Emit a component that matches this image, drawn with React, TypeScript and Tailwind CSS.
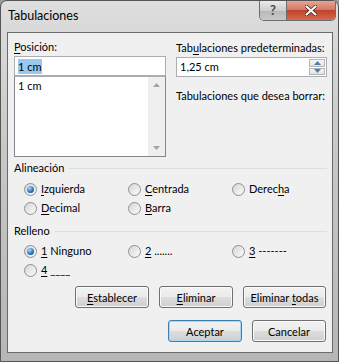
import React from "react";

const Key = ({ children }: { children: React.ReactNode }) => (
  <span className="underline decoration-1 underline-offset-[2px]">{children}</span>
);

const Radio = ({ checked }: { checked?: boolean }) => (
  <span className="flex h-[13px] w-[13px] shrink-0 items-center justify-center rounded-full border border-[#8e8f8f] bg-[linear-gradient(135deg,#d6d6d6,#fbfbfb)]">
    {checked && (
      <span className="h-[7px] w-[7px] rounded-full bg-[radial-gradient(circle_at_35%_30%,#a9dcff,#2a6fb6_60%,#0e3f7a)]" />
    )}
  </span>
);

const Option = ({ checked, children }: { checked?: boolean; children: React.ReactNode }) => (
  <label className="flex h-[19px] items-center gap-[4px] whitespace-nowrap">
    <Radio checked={checked} />
    <span>{children}</span>
  </label>
);

const GroupTitle = ({ children }: { children: React.ReactNode }) => (
  <div className="flex h-[16px] items-center">
    <span>{children}</span>
    <span className="ml-[5px] h-px flex-1 bg-[#d5dfe5]" />
  </div>
);

const Btn = ({ children, primary, w = "w-[74px]" }: { children: React.ReactNode; primary?: boolean; w?: string }) => (
  <button
    className={`${w} h-[22px] whitespace-nowrap rounded-[3px] border ${
      primary
        ? "border-[#3c7fb1] shadow-[inset_0_0_0_1px_#9fd9f7]"
        : "border-[#707070] shadow-[inset_0_0_0_1px_#fbfbfb]"
    } bg-[linear-gradient(#f2f2f2_0%,#ebebeb_50%,#dddddd_51%,#cfcfcf_100%)] text-[11px] leading-none text-black`}
  >
    {children}
  </button>
);

const ScrollArrow = ({ up }: { up?: boolean }) => (
  <svg width="7" height="4" viewBox="0 0 7 4">
    <path d={up ? "M0 4 L3.5 0 L7 4 Z" : "M0 0 L3.5 4 L7 0 Z"} fill="#a3a3a3" />
  </svg>
);

const SpinArrow = ({ up }: { up?: boolean }) => (
  <svg width="7" height="4" viewBox="0 0 7 4">
    <path d={up ? "M0 4 L3.5 0 L7 4 Z" : "M0 0 L3.5 4 L7 0 Z"} fill="#4a7fb5" />
  </svg>
);

export default function App() {
  return (
    <div className="h-[362px] w-[339px] bg-[#9a9a9a] font-['Lato',sans-serif] text-[11px] text-black">
      <div className="flex h-[362px] w-[339px] flex-col rounded-t-[7px] border border-[#555] bg-[linear-gradient(#dedede,#c8c8c8_40%,#b6b6b6)]">
        {/* title bar */}
        <div className="flex h-[31px] items-start justify-between">
          <span className="mt-[6px] pl-[7px] text-[12.5px] leading-[18px] text-black">Tabulaciones</span>
          <div className="mr-[2px] flex h-[20px] overflow-hidden rounded-b-[5px] border border-t-0 border-[#6d6d6d]">
            <div className="flex w-[27px] items-center justify-center border-r border-[#6d6d6d] bg-[linear-gradient(#e9e9e9,#cfcfcf_50%,#b8b8b8_51%,#c9c9c9)] text-[13px] font-bold text-[#4a4a4a]">
              ?
            </div>
            <div className="flex w-[48px] items-center justify-center bg-[linear-gradient(#e8a493,#d27a68_45%,#c2422c_50%,#d36a4f)]">
              <svg width="12" height="11" viewBox="0 0 12 11">
                <path d="M1.5 1.5 L10.5 9.5 M10.5 1.5 L1.5 9.5" stroke="#3a2020" strokeWidth="3.6" strokeLinecap="round" />
                <path d="M1.5 1.5 L10.5 9.5 M10.5 1.5 L1.5 9.5" stroke="#ffffff" strokeWidth="2.2" strokeLinecap="round" />
              </svg>
            </div>
          </div>
        </div>

        {/* client */}
        <div className="ml-[6px] flex h-[321px] w-[326px] flex-col border border-[#6b6b6b] bg-[#f0f0f0] pl-[6px] pr-[5px] pt-[6px]">
          <div className="grid grid-cols-[152px_151px] gap-x-[10px]">
            <div className="flex flex-col">
              <div className="h-[16px] leading-[16px]">
                <Key>P</Key>osición:
              </div>
              <div className="mt-[1px] flex h-[20px] items-center border border-[#abadb3] bg-white pl-[3px]">
                <span className="bg-[#99c9ef] leading-[15px]">1 cm</span>
              </div>
              <div className="flex h-[81px] border border-[#828790] border-t-[#abadb3] bg-white">
                <div className="flex-1 pl-[3px] pt-[1px] leading-[16px]">1 cm</div>
                <div className="flex w-[17px] flex-col items-center justify-between bg-[#efefef] py-[6px]">
                  <ScrollArrow up />
                  <ScrollArrow />
                </div>
              </div>
            </div>
            <div className="flex flex-col pt-[1px]">
              <div className="h-[16px] whitespace-nowrap leading-[16px]">
                Tab<Key>u</Key>laciones predeterminadas:
              </div>
              <div className="mt-[1px] flex h-[20px] items-center border border-[#abadb3] bg-white pl-[3px]">
                <span className="flex-1">1,25 cm</span>
                <div className="mr-[1px] flex h-[16px] w-[16px] flex-col gap-[1px]">
                  <div className="flex flex-1 items-center justify-center border border-[#b5b5b5] bg-[linear-gradient(#f7f7f7,#e2e2e2)]">
                    <SpinArrow up />
                  </div>
                  <div className="flex flex-1 items-center justify-center border border-[#b5b5b5] bg-[linear-gradient(#f7f7f7,#e2e2e2)]">
                    <SpinArrow />
                  </div>
                </div>
              </div>
              <div className="mt-[11px] h-[16px] whitespace-nowrap leading-[16px]">Tabulaciones que desea borrar:</div>
            </div>
          </div>

          <div className="mt-[3px]">
            <GroupTitle>Alineación</GroupTitle>
          </div>
          <div className="mt-[4px] grid grid-cols-[104px_104px_1fr] pl-[10px]">
            <Option checked>
              <Key>I</Key>zquierda
            </Option>
            <Option>
              <Key>C</Key>entrada
            </Option>
            <Option>
              Derec<Key>h</Key>a
            </Option>
            <Option>
              <Key>D</Key>ecimal
            </Option>
            <Option>
              <Key>B</Key>arra
            </Option>
          </div>

          <div className="mt-[5px]">
            <GroupTitle>Relleno</GroupTitle>
          </div>
          <div className="mt-[3px] grid grid-cols-[104px_104px_1fr] pl-[10px]">
            <Option checked>
              <Key>1</Key> Ninguno
            </Option>
            <Option>
              <Key>2</Key> .......
            </Option>
            <Option>
              <Key>3</Key> -------
            </Option>
            <Option>
              <Key>4</Key> ____
            </Option>
          </div>

          <div className="mr-[1px] mt-[6px] flex justify-end gap-[10px]">
            <Btn>
              <Key>E</Key>stablecer
            </Btn>
            <Btn>
              <Key>E</Key>liminar
            </Btn>
            <Btn w="w-[83px]">
              Eliminar <Key>t</Key>odas
            </Btn>
          </div>
          <div className="mr-[1px] mt-[12px] flex justify-end gap-[10px]">
            <Btn primary>Aceptar</Btn>
            <Btn>Cancelar</Btn>
          </div>
        </div>
      </div>
    </div>
  );
}
